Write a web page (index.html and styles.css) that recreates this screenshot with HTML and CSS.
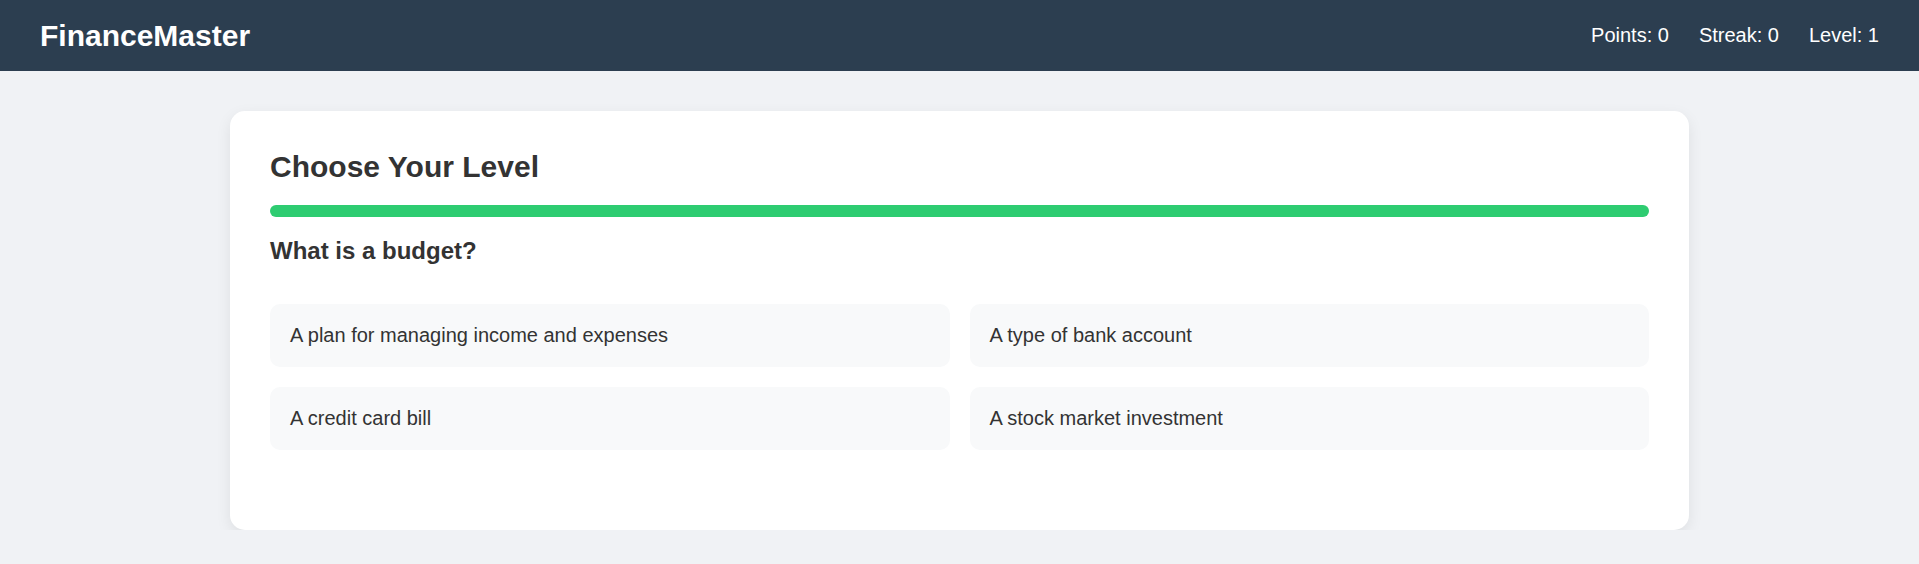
FILE: index.html
```html
<!DOCTYPE html>
<html lang="en">
<head>
    <meta charset="UTF-8">
    <title>FinanceMaster</title>
    <link rel="stylesheet" href="styles.css">
</head>

<body>
<header class="top-bar">
    <div class="logo">FinanceMaster</div>
    <div class="stats">
        <span class="stat">Points: 0</span>
        <span class="stat">Streak: 0</span>
        <span class="stat">Level: 1</span>
    </div>
</header>

<div class="quiz-card">
    <h2 class="quiz-title">Choose Your Level</h2>
    <div class="progress"><div class="progress-fill"></div></div>
    <h3 class="question">What is a budget?</h3>
    <ul class="options">
        <li class="option">A plan for managing income and expenses</li>
        <li class="option">A type of bank account</li>
        <li class="option">A credit card bill</li>
        <li class="option">A stock market investment</li>
    </ul>
</div>
</body>
</html>
```

FILE: styles.css
```css
body,ul,li,h2,h3{
    padding: 0;
    margin: 0;
}
body{
    background-color: #f0f2f5;
    font-family: "Liberation Sans", Arial, sans-serif;
    color: #333;
}
ul{
    list-style: none;
}
.top-bar{
    height: 71px;
    padding: 0 40px;
    background-color: #2c3e50;
    color: #fff;
    display: flex;
    align-items: center;
    justify-content: space-between;
}
.logo{
    font-size: 30px;
    font-weight: bold;
}
.stats{
    display: flex;
    gap: 30px;
    font-size: 20px;
}
.quiz-card{
    box-sizing: border-box;
    max-width: 1459px;
    margin: 40px auto 0;
    padding: 39px 40px;
    background-color: #fff;
    border-radius: 15px;
    box-shadow: 0 5px 15px rgba(0,0,0,0.08);
}
.quiz-title{
    font-size: 30px;
    font-weight: bold;
    margin-bottom: 21px;
}
.progress{
    height: 12px;
    border-radius: 6px;
    background-color: #e9ecef;
    overflow: hidden;
    margin-bottom: 20px;
}
.progress-fill{
    width: 100%;
    height: 100%;
    background-color: #2ecc71;
}
.question{
    font-size: 24px;
    font-weight: bold;
    margin-bottom: 39px;
}
.options{
    display: grid;
    grid-template-columns: 1fr 1fr;
    gap: 20px;
    margin-bottom: 41px;
}
.option{
    padding: 20px;
    line-height: 23px;
    font-size: 20px;
    background-color: #f8f9fa;
    border-radius: 10px;
    cursor: pointer;
}
```
